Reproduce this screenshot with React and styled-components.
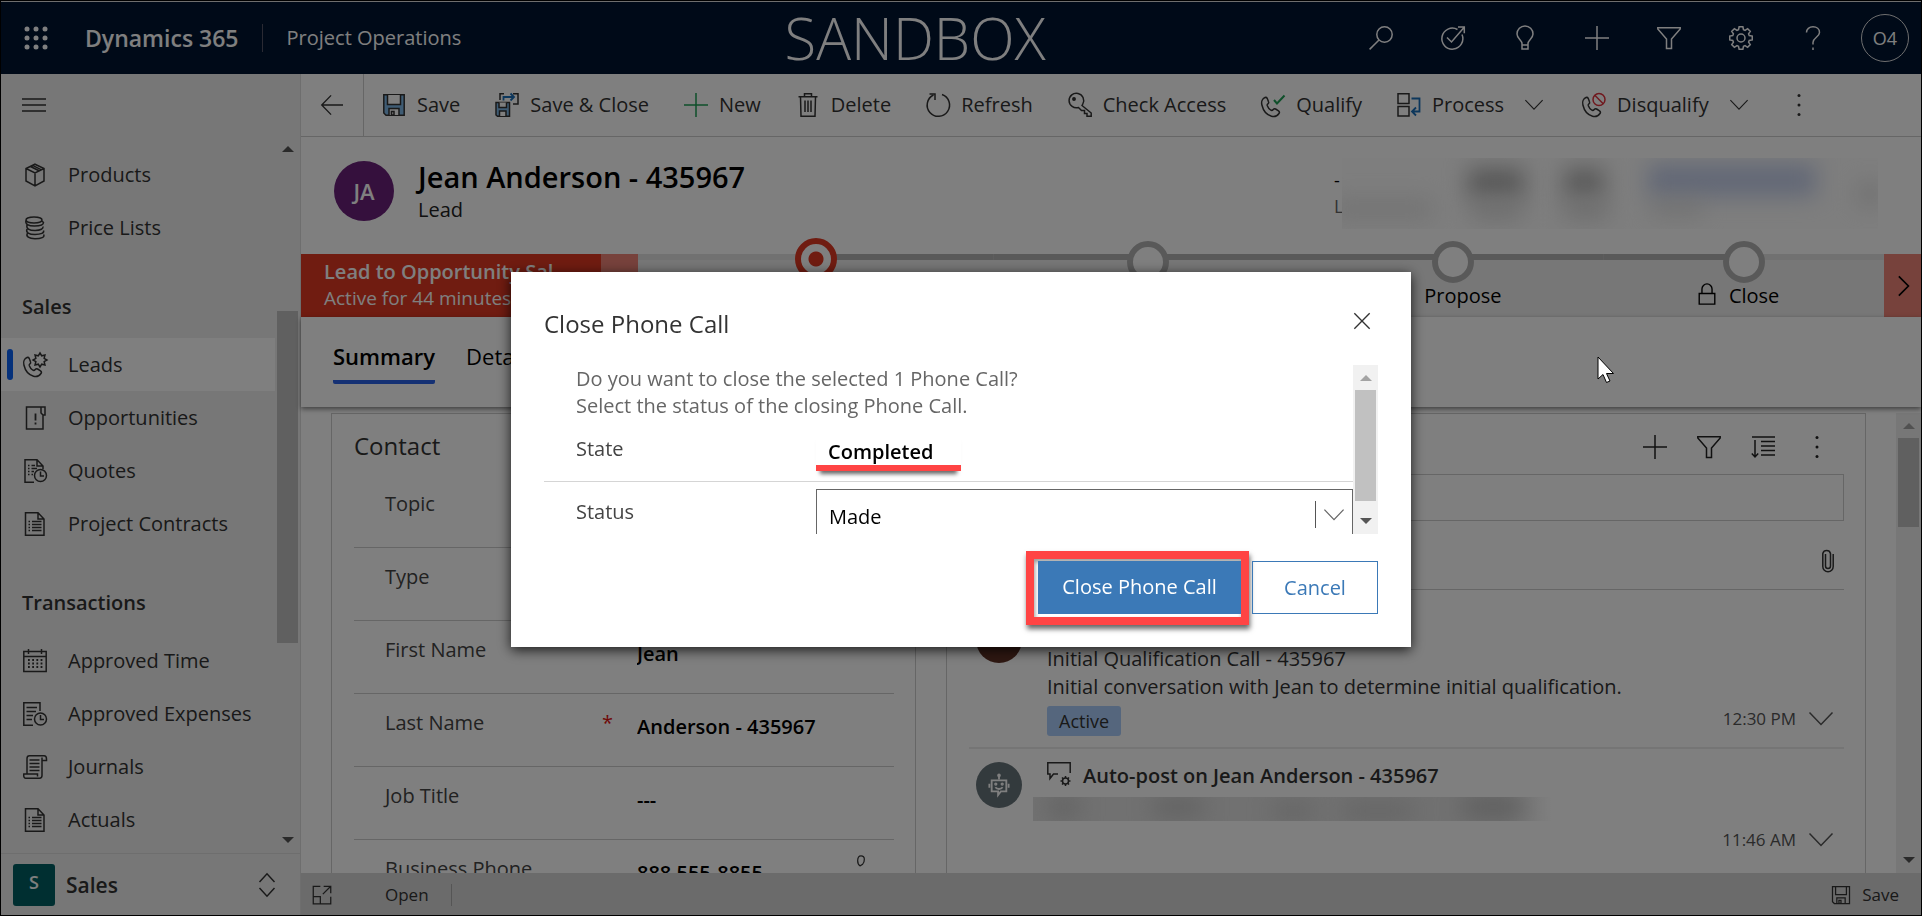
import React from "react";
import styled, { createGlobalStyle, css } from "styled-components";

const GlobalStyle = createGlobalStyle`
  *, *::before, *::after { box-sizing: border-box; }
  body { margin: 0; background: #000; }
  body, button, input, select {
    font-family: "Open Sans", "Noto Sans", sans-serif;
    font-size: 20px;
    line-height: 28px;
  }
  button, input, select { margin: 0; padding: 0; border: 0; background: none; color: inherit; border-radius: 0; }
  a { color: inherit; text-decoration: none; }
  h1, h2, p { margin: 0; font-weight: 400; }
  svg { display: block; flex: none; }
`;

/* ---------- icons ---------- */

const Svg = styled.svg.attrs({ "aria-hidden": true, fill: "none", stroke: "currentColor" })`
  overflow: visible;
`;

function Icon({ size = 24, w = 1.5, box = 24, children }) {
  return (
    <Svg width={size} height={size} viewBox={`0 0 ${box} ${box}`} strokeWidth={w}>
      {children}
    </Svg>
  );
}

const gear = (cx, cy, r, R, n = 8) => {
  const pts = [];
  for (let i = 0; i < n; i++) {
    const a = (i * 2 * Math.PI) / n - Math.PI / 2;
    const s = Math.PI / n;
    [[-0.75, r], [-0.42, R], [0.42, R], [0.75, r]].forEach(([k, q]) =>
      pts.push(`${(cx + q * Math.cos(a + k * s)).toFixed(2)} ${(cy + q * Math.sin(a + k * s)).toFixed(2)}`)
    );
  }
  return `M${pts.join("L")}Z`;
};

const star = (cx, cy, r, R, n = 8) => {
  const pts = [];
  for (let i = 0; i < n * 2; i++) {
    const a = (i * Math.PI) / n - Math.PI / 2;
    const q = i % 2 ? r : R;
    pts.push(`${(cx + q * Math.cos(a)).toFixed(2)} ${(cy + q * Math.sin(a)).toFixed(2)}`);
  }
  return `M${pts.join("L")}Z`;
};

const phone = "M4 4.500C1.600 5.500 0 8.500 .9 12C2.200 17.500 6 22 10.500 23.200C13.500 24 16.400 22.800 18 20.500C18.800 19.300 18.500 18.500 17.500 17.800L14.600 16C13.600 15.400 12.900 15.700 12.200 16.500C11.500 17.400 10.500 17.600 9.600 17C8.200 16 7 14.400 6.300 12.700C6 11.800 6.200 11.300 6.900 10.800C7.800 10.200 7.900 9.600 7.500 8.700L6.200 5.300C5.700 4.400 5 4.200 4 4.500Z";

const WaffleIcon = () => (
  <Icon size={24}>
    {[3, 12, 21].map((y) => [3, 12, 21].map((x) => (
      <circle key={`${x}-${y}`} cx={x} cy={y} r="2.500" fill="currentColor" stroke="none" />
    )))}
  </Icon>
);
const SearchIcon = () => <Icon><circle cx="15.500" cy="8.500" r="7.700" /><path d="M10 14L.6 23.400" /></Icon>;
const TargetIcon = () => (
  <Icon><path d="M16.500 3.500A10.500 10.500 0 1 0 21 8.500" /><path d="M6 11.500L10.500 16L23 1.500M17 1H23.300V7.300" /></Icon>
);
const BulbIcon = () => (
  <Icon><path d="M9 17.500C9 14 4 12.500 4 8A8 8 0 0 1 20 8C20 12.500 15 14 15 17.500V23H9ZM9 19H15" /></Icon>
);
const PlusIcon = ({ size }) => <Icon size={size}><path d="M12 0V24M0 12H24" /></Icon>;
const FilterIcon = () => <Icon><path d="M.8 1.800H23.200V3L14.500 13V22.500H9.500V13L.8 3Z" /></Icon>;
const GearIcon = () => <Icon><path d={gear(12, 12, 8.600, 11.400)} /><circle cx="12" cy="12" r="4" /></Icon>;
const HelpIcon = () => (
  <Icon><path d="M5.500 6.500C5.500 3 8.300 .8 12 .8S18.500 3 18.500 6.500C18.500 11 12 11.500 12 16.500V18.500M12 21.500V24" /></Icon>
);
const MenuIcon = () => <Icon><path d="M0 6H24M0 12H24M0 18H24" /></Icon>;
const BackIcon = () => <Icon size={22}><path d="M24 12H1M11 1.500L.8 12L11 22.500" /></Icon>;
const MoreIcon = () => (
  <Icon><g fill="currentColor" stroke="none"><circle cx="12" cy="2.500" r="1.500" /><circle cx="12" cy="12" r="1.500" /><circle cx="12" cy="21.500" r="1.500" /></g></Icon>
);
const ChevronDown = ({ size = 18, w = 1.5 }) => <Icon size={size} w={w}><path d="M.5 5.500L12 17.500L23.500 5.500" /></Icon>;
const ChevronRight = () => <Icon size={20} w={2}><path d="M7 .5L18.500 12L7 23.500" /></Icon>;
const CloseIcon = () => <Icon size={16} w={2}><path d="M.5 .5L23.500 23.500M23.500 .5L.5 23.500" /></Icon>;
const SaveIcon = ({ fill = "#7fb8e8", size = 24 }) => (
  <Icon size={size}>
    <path d="M1.800 1.800H22.200V22.200H4L1.800 20Z" fill={fill} />
    <path d="M5.500 2V11.500H18.500V2M7 22V15.500H17V22" fill={fill === "none" ? "none" : "#fff"} />
    <path d="M9.500 18.500H12V22H9.500Z" />
  </Icon>
);
const SaveCloseIcon = () => (
  <Icon>
    <path d="M1 9.500H14.500V23.300H2.500L1 22Z" fill="#7fb8e8" />
    <path d="M4 9.500V14.500H11.500V9.500M4.500 23V18H11V23" fill="#fff" />
    <path d="M5 7V.8H9M18 .8H23V11H18" />
    <path d="M8.500 7.500V4H19M15.500 .5L19 4L15.500 7.500" stroke="#1a6fb8" strokeWidth="1.800" />
  </Icon>
);
const DeleteIcon = () => (
  <Icon><path d="M2.500 3.800H21.500M8.500 3.500V.8H15.500V3.500M4.500 4L5 23.200H19L19.500 4M9 7.500V19M12 7.500V19M15 7.500V19" /></Icon>
);
const RefreshIcon = () => (
  <Icon><path d="M7.500 2A11.200 11.200 0 1 0 16 1.500" /><path d="M3.500 1H9V7" /></Icon>
);
const KeyIcon = () => (
  <Icon><path d="M14 12.500L23.200 20V23.200H19V20.500H16.500V17.500H13.500L10.500 14.500A7.300 7.300 0 1 1 14.800 11Z" /><circle cx="6" cy="6" r="1.200" fill="currentColor" /></Icon>
);
const QualifyIcon = () => (
  <Icon><path d={phone} /><path d="M13 7L16 10.500L23.500 2.500" stroke="#1e9e55" strokeWidth="2" /></Icon>
);
const ProcessIcon = () => (
  <Icon><path d="M1 .8H12V10.500H1ZM1 13.500H12V23H1Z" /><path d="M14.500 5.500H22.500V18.500H15.500M19 14.500L15 18.500L19 22.500" stroke="#1a6fb8" strokeWidth="1.800" /></Icon>
);
const DisqualifyIcon = () => (
  <Icon><path d={phone} /><circle cx="17" cy="6.500" r="6" stroke="#e0303c" strokeWidth="1.500" /><path d="M12.800 2.300L21.200 10.700" stroke="#e0303c" strokeWidth="1.500" /></Icon>
);
const BoxIcon = () => (
  <Icon><path d="M12 1.200L21 5.500V18L12 22.800L3 18V5.500ZM3 5.500L12 10L21 5.500M12 10V22.800M7.500 3.500L16.500 8M9.500 2.300L18.500 6.800" /></Icon>
);
const CoinsIcon = () => (
  <Icon>
    <ellipse cx="11" cy="4" rx="8" ry="3" />
    <path d="M3 4.500C2 8 5 10 11.500 10S20.500 8.500 20.500 6.500L19 5M4 9C3 12.500 6 14.500 12 14.500S20.500 12.500 20 10.500M4 13C2.500 16.500 6 18.500 12 18.500S21.500 17 20.500 14.500M4.500 17C2.500 20.500 6 22.800 12 22.800S22.500 21 20.500 18.500" />
  </Icon>
);
const LeadIcon = () => <Icon><path d={phone} /><path d={star(17, 7, 4.500, 7)} fill="#fff" /></Icon>;
const OpportunityIcon = () => (
  <Icon><path d="M18 1H3.500V23H20V9M18 1H22V9H20L18 7Z" /><path d="M12.500 7.500V14.500M12.500 16.500V18.500" strokeWidth="1.800" /></Icon>
);
const PageIcon = () => (
  <Icon><path d="M2.500 .8H15L21 7V23.200H2.500ZM15 .8V7H21" /><path d="M5.500 9.500H7M9 9.500H18.500M5.500 12.500H7M9 12.500H18.500M5.500 15.500H7M9 15.500H18.500M5.500 18.500H7M9 18.500H18.500" /></Icon>
);
const PageClockIcon = () => (
  <Icon>
    <path d="M11 23.200H2V.8H14L20 7V10M14 .8V7H20" /><path d="M5 6.500H6.500M8.500 6.500H12M5 9.500H6.500M8.500 9.500H14M5 12.500H6.500M8.500 12.500H11M5 15.500H6.500M8.500 15.500H10" />
    <circle cx="17.500" cy="16.500" r="6" /><path d="M17.500 12.500V17H21" />
  </Icon>
);
const CalendarIcon = () => (
  <Icon><path d="M.8 2.500H23.200V22.500H.8ZM.8 7.500H23.200M5.500 0V5M18.500 0V5" /><path d="M5 11H20M5 14.500H20M5 18H20" strokeDasharray="1.800 2.400" strokeWidth="2" /></Icon>
);
const ExpenseIcon = () => (
  <Icon><path d="M10 23.200H.8V.8H17V9M3.500 5.500H14M3.500 9.500H13M3.500 13.500H10M3.500 17.500H9" /><circle cx="17.500" cy="17" r="6" /><path d="M17.500 13V17.500H21" /></Icon>
);
const JournalIcon = () => (
  <Icon><path d="M4 19V3.500C4 1.500 5 .8 6.500 .8H21C23 .8 23.500 2 23.500 4V5.500H19V20.500C19 22.500 18 23.200 16.500 23.200H2.500C1 23.200 .5 21.500 .8 19H14.500V21.500M19 5V2.500M6.500 5H16.500M6.500 8.500H16.500M6.500 12H16.500M6.500 15.500H16.500" /></Icon>
);
const UpDownIcon = () => <Icon w={1.5}><path d="M4.500 9L12 .8L19.500 9M4.500 15L12 23.200L19.500 15" /></Icon>;
const LockIcon = () => <Icon size={22}><path d="M3.500 11.500H20.500V23H3.500ZM6.500 11V6.500A5.500 5.500 0 0 1 17.500 6.500V11" /></Icon>;
const SortIcon = () => <Icon><path d="M1 2H24M10 6.500H24M10 11H24M10 15.500H24M10 20H24M4 5V22M.8 18.500L4 22L7.200 18.500" /></Icon>;
const ClipIcon = () => (
  <Icon><path d="M9.500 6V18A2.500 2.500 0 0 0 14.500 18V5.500A4 4 0 0 0 6.800 5.500V18.500A5 5 0 0 0 17.200 18.500V6" /></Icon>
);
const CommentIcon = () => (
  <Icon>
    <path d="M11 12H6.500L3 16.500V12H.8V.8H23.200V11" />
    <circle cx="18.500" cy="19" r="3" />
    <path d="M18.500 14V16M18.500 22V24M13.500 19H15.500M21.500 19H23.500M15 15.500L16.500 17M20.500 21L22 22.500M22 15.500L20.500 17M16.500 21L15 22.500" />
  </Icon>
);
const BotIcon = () => (
  <Icon size={22} w={2}>
    <path d="M4 7H20V19H14L11 23V19H4Z" /><path d="M12 6V1.500M1.500 10.500V15M22.500 10.500V15" /><path d="M8 14.500C10 17 14 17 16 14.500" />
    <circle cx="8.500" cy="11" r=".8" /><circle cx="15.500" cy="11" r=".8" /><circle cx="12" cy="1.500" r="1" />
  </Icon>
);
const PopoutIcon = () => <Icon size={20}><path d="M10 1.500H1.500V22.500H22.500V14M1.500 14H10V22.500M14 1.500H22.500V10M22.500 1.500L13 11" /></Icon>;
const HandsetIcon = () => <Icon size={20}><path d="M12 1C9 1 8 4 8 7C8 10 9 12 11 13L14 11C16 9 16 7 16 5C16 2.500 14.500 1 12 1Z" /></Icon>;
const CursorIcon = () => (
  <Svg width="18" height="28" viewBox="0 0 18 28" strokeWidth="1">
    <path d="M1 1V23L6 18.500L9.500 26.500L13 25L9.500 17.500H16.500Z" fill="#fff" stroke="#000" />
  </Svg>
);

/* ---------- shell ---------- */

const Page = styled.div`
  height: 100vh;
  min-height: 600px;
  display: flex;
  flex-direction: column;
  overflow: hidden;
  background: #fff;
  color: #333;
  border: 1px solid #000;
`;

const TopBar = styled.header`
  flex: none;
  height: 73px;
  display: grid;
  grid-template-columns: auto 1fr auto;
  align-items: center;
  background: #001431;
  border-top: 1px solid #ddd;
  color: #fff;
  padding: 0 12px 0 23px;
`;
const Brand = styled.div`
  display: flex;
  align-items: center;
`;
const BrandName = styled.a`
  margin-left: 37px;
  padding-right: 23px;
  font-size: 23px;
  font-weight: 600;
`;
const AppName = styled.a`
  border-left: 1px solid #556;
  padding-left: 24px;
`;
const EnvName = styled.div`
  font-size: 58px;
  line-height: 72px;
  font-weight: 300;
  text-align: center;
`;
const TopActions = styled.div`
  display: flex;
  justify-content: flex-end;
  align-items: center;
  gap: 48px;
`;
const IconButton = styled.button`
  display: grid;
  place-items: center;
  width: 24px;
  height: 24px;
`;
const UserButton = styled.button`
  width: 48px;
  height: 48px;
  margin-left: -12px;
  border: 1px solid #ddd;
  border-radius: 50%;
  font-size: 18px;
`;

const Body = styled.div`
  flex: 1;
  min-height: 0;
  display: flex;
`;

/* ---------- site map ---------- */

const Sidebar = styled.aside`
  flex: none;
  width: 300px;
  display: flex;
  flex-direction: column;
  background: #efefef;
  border-right: 1px solid #ddd;
`;
const SidebarTop = styled.div`
  padding: 19px 21px;
  height: 62px;
`;
const NavScroller = styled.div`
  flex: 1;
  min-height: 0;
  display: flex;
`;
const Nav = styled.nav`
  flex: 1;
  padding-top: 12px;
  overflow: hidden;
`;
const NavHeading = styled.h2`
  height: 84px;
  padding: 39px 21px 0;
  font-size: 20px;
  font-weight: 600;
`;
const NavLink = styled.a`
  height: 53px;
  display: flex;
  align-items: center;
  gap: 21px;
  padding-left: 22px;
  ${(p) => p.$current && css`
    background: #fff;
    &::before {
      content: "";
      width: 6px;
      height: 31px;
      margin: 0 -11px 0 -16px;
      border-radius: 3px;
      background: #0b63f6;
    }
  `}
`;
const AreaSwitcher = styled.button`
  flex: none;
  height: 62px;
  display: flex;
  align-items: center;
  gap: 11px;
  padding: 0 21px 0 12px;
  border-top: 1px solid #ddd;
  font-size: 21px;
  font-weight: 600;
  text-align: left;
`;
const AreaTile = styled.span`
  width: 42px;
  height: 42px;
  border-radius: 3px;
  background: #005f63;
  color: #fff;
  font-size: 18px;
  line-height: 36px;
  text-align: center;
`;
const Grow = styled.span`
  flex: 1;
`;

/* ---------- scroll bars ---------- */

const ScrollTrack = styled.div`
  flex: none;
  width: 25px;
  display: flex;
  flex-direction: column;
  align-items: center;
  justify-content: space-between;
  padding: 10px 0;
  background: ${(p) => p.$bg || "transparent"};
`;
const Arrow = styled.span`
  flex: none;
  border: 6px solid transparent;
  ${(p) => p.$down
    ? css`border-top: 6px solid #555; border-bottom: 0;`
    : css`border-bottom: 6px solid ${p.$faint ? "#a3a3a3" : "#555"}; border-top: 0;`}
`;
const Thumb = styled.span`
  width: 21px;
  margin-top: ${(p) => p.$before}px;
  height: ${(p) => p.$length};
  margin-bottom: auto;
  background: #c1c1c1;
`;

/* ---------- command bar ---------- */

const Main = styled.main`
  flex: 1;
  min-width: 0;
  display: flex;
  flex-direction: column;
`;
const CommandBar = styled.div`
  flex: none;
  height: 63px;
  display: flex;
  align-items: center;
  border-bottom: 1px solid #ccc;
`;
const BackButton = styled.button`
  align-self: stretch;
  width: 63px;
  display: grid;
  place-items: center;
  border-right: 1px solid #ccc;
`;
const Commands = styled.div`
  display: flex;
  align-items: center;
  gap: 35px;
  padding-left: 18px;
`;
const Command = styled.button`
  display: flex;
  align-items: center;
  gap: 11px;
  color: ${(p) => p.$tone || "inherit"};
  white-space: nowrap;
`;
const CommandText = styled.span`
  color: #333;
`;
const MenuMark = styled.span`
  padding: 0 4px 0 10px;
  color: #333;
`;

/* ---------- record header ---------- */

const RecordHeader = styled.div`
  flex: none;
  height: 117px;
  display: flex;
  padding: 21px 43px 0 33px;
`;
const RoundBadge = styled.span`
  flex: none;
  display: grid;
  place-items: center;
  width: ${(p) => p.$size}px;
  height: ${(p) => p.$size}px;
  border-radius: 50%;
  background: ${(p) => p.$bg};
  color: #fff;
  font-size: ${(p) => (p.$size > 50 ? 22 : 18)}px;
  font-weight: 600;
`;
const RecordAvatar = styled(RoundBadge)`
  margin-top: 3px;
`;
const RecordTitles = styled.div`
  flex: 1;
  padding-left: 24px;
`;
const RecordTitle = styled.h1`
  color: #000;
  font-size: 29px;
  line-height: 38px;
  font-weight: 600;
`;
const RecordKind = styled.p`
  color: #222;
`;
const HeaderField = styled.div`
  color: #000;
  font-size: 18px;
  width: 8px;
  overflow: hidden;
  padding-top: 8px;
  span { display: block; color: #666; line-height: 24px; }
`;
const Redacted = styled.div`
  position: relative;
  flex: none;
  width: ${(p) => p.$width}px;
  height: ${(p) => p.$height}px;
  overflow: hidden;
  background: ${(p) => p.$bg};
`;
const RedactedLine = styled(Redacted)`
  margin: 7px 0 5px -14px;
`;
const Smudge = styled.span`
  position: absolute;
  left: ${(p) => p.$x}px;
  top: ${(p) => p.$y}px;
  width: ${(p) => p.$w}px;
  height: ${(p) => p.$h}px;
  background: ${(p) => p.$c};
  filter: blur(11px);
`;

/* ---------- process ---------- */

const ProcessBar = styled.div`
  flex: none;
  height: 63px;
  display: flex;
`;
const ProcessName = styled.div`
  flex: none;
  width: 300px;
  padding: 4px 23px;
  background: #e03822;
  color: #fff;
  font-size: 19px;
  line-height: 27px;
  white-space: nowrap;
  overflow: hidden;
`;
const ProcessTitle = styled.div`
  width: 232px;
  overflow: hidden;
  font-size: 20px;
  font-weight: 600;
`;
const ProcessStep = styled.button`
  flex: none;
  width: 37px;
  display: grid;
  place-items: center;
  background: #ef8478;
  color: #000;
`;
const Stages = styled.div`
  flex: 1;
  display: flex;
  background: #efefef;
`;
const Stage = styled.div`
  flex: ${(p) => p.$share} 1 0;
  display: flex;
  flex-direction: column;
  align-items: center;
  background: linear-gradient(to right, ${(p) => (p.$first ? "#e3e3e3" : "#b3b3b3")} 50%, ${(p) => (p.$last ? "#e3e3e3" : "#b3b3b3")} 50%) top / 100% 6px no-repeat;
`;
const StageDot = styled.button`
  flex: none;
  width: 42px;
  height: 42px;
  margin-top: ${(p) => (p.$active ? -16 : -13)}px;
  border: 6px solid ${(p) => (p.$active ? "#e03822" : "#b3b3b3")};
  border-radius: 50%;
  background: ${(p) => (p.$active ? "radial-gradient(#e03822 0 7px, #fff 8px)" : "#fff")};
`;
const StageLabel = styled.div`
  display: flex;
  align-items: center;
  gap: 11px;
  margin-right: 13px;
  line-height: 22px;
  color: #000;
  svg { margin-bottom: 4px; }
`;

/* ---------- tabs and form ---------- */

const Tabs = styled.div`
  flex: none;
  position: relative;
  height: 90px;
  display: flex;
  align-items: flex-start;
  gap: 31px;
  padding: 23px 32px 0;
  box-shadow: 0 2px 5px rgba(0, 0, 0, 0.5);
`;
const Tab = styled.button`
  padding-bottom: 8px;
  border-bottom: 4px solid ${(p) => (p.$current ? "#2b63e8" : "transparent")};
  border-radius: 2px;
  color: #000;
  font-size: 22px;
  line-height: 32px;
  font-weight: ${(p) => (p.$current ? 600 : 400)};
`;
const FormArea = styled.div`
  flex: 1;
  min-height: 0;
  display: flex;
  justify-content: space-between;
  padding-top: 6px;
  overflow: hidden;
`;
const FormColumns = styled.div`
  flex: 1;
  min-width: 0;
  display: grid;
  grid-template-columns: 585fr 920fr;
  gap: 30px;
  padding: 0 30px;
`;
const Card = styled.section`
  min-width: 0;
  border: 1px solid #ccc;
  border-bottom: 0;
  padding: 16px 21px 0 22px;
`;
const CardTitle = styled.h2`
  font-size: 24px;
  line-height: 32px;
`;
const FieldRow = styled.div`
  height: 73px;
  display: grid;
  grid-template-columns: 200px 18px 1fr auto;
  gap: 0 17px;
  padding: 15px 23px 0 31px;
  border-bottom: 1px solid #ccc;
  label { color: #444; }
`;
const Required = styled.span`
  color: #e01010;
`;
const FieldInput = styled.input`
  width: 100%;
  height: 28px;
  margin-top: 4px;
  color: #000;
  font-weight: 600;
`;
const FieldList = styled.div`
  padding-top: 13px;
`;

/* ---------- timeline ---------- */

const TimelineTools = styled.div`
  height: 34px;
  display: flex;
  align-items: center;
  justify-content: flex-end;
  gap: 30px;
  padding-right: 15px;
  color: #222;
`;
const TimelineSearch = styled.input`
  display: block;
  width: 100%;
  height: 47px;
  margin-top: 10px;
  border: 1px solid #ccc;
`;
const NoteRow = styled.div`
  height: 69px;
  display: flex;
  align-items: center;
  justify-content: flex-end;
  padding: 10px 4px 0 0;
  border-bottom: 1px solid #ccc;
`;
const Entry = styled.article`
  display: flex;
  gap: 25px;
  padding: ${(p) => p.$top}px 0 11px 7px;
  border-bottom: 2px solid #eaeaea;
  &:last-child { border-bottom: 0; }
`;
const EntryBody = styled.div`
  flex: 1;
  min-width: 0;
`;
const EntryTitle = styled.h2`
  display: flex;
  align-items: center;
  gap: 12px;
  color: #333;
  font-size: 20px;
  font-weight: 600;
  svg { margin-bottom: 4px; }
`;
const EntryFoot = styled.div`
  display: flex;
  align-items: center;
  justify-content: space-between;
  padding-right: 11px;
`;
const StatusTag = styled.span`
  height: 30px;
  margin-top: 5px;
  padding: 0 12px;
  border-radius: 3px;
  background: #aacdfa;
  font-size: 18px;
  line-height: 30px;
`;
const EntryTime = styled.button`
  display: flex;
  align-items: center;
  gap: 13px;
  margin-left: auto;
  color: #555;
  font-size: 17px;
`;

const StatusBar = styled.footer`
  flex: none;
  height: 42px;
  display: flex;
  align-items: center;
  padding: 2px 22px 0 9px;
  background: #d6d6d6;
  font-size: 17px;
`;
const FooterButton = styled.button`
  display: flex;
  align-items: center;
  gap: 11px;
  font-size: 17px;
`;
const OpenState = styled.span`
  margin-left: 51px;
  padding-right: 22px;
  border-right: 1px solid #aaa;
  line-height: 22px;
`;

/* ---------- dialog ---------- */

const Backdrop = styled.div`
  position: fixed;
  inset: 0;
  display: grid;
  place-items: center;
  padding-top: 2px;
  background: rgba(0, 0, 0, 0.5);
`;
const Dialog = styled.div`
  width: 900px;
  max-width: 100%;
  display: flex;
  flex-direction: column;
  padding: 33px 33px 22px;
  background: #fff;
  color: #333;
  box-shadow: 0 3px 12px rgba(0, 0, 0, 0.8);
`;
const DialogHead = styled.div`
  flex: none;
  display: flex;
  justify-content: space-between;
  height: 60px;
  padding-right: 4px;
`;
const DialogClose = styled(IconButton)`
  margin-top: 4px;
`;
const DialogTitle = styled.h2`
  font-size: 24px;
  line-height: 38px;
`;
const DialogScroller = styled.div`
  flex: none;
  height: 169px;
  display: flex;
`;
const DialogBody = styled.div`
  flex: 1;
  overflow: hidden;
`;
const Message = styled.p`
  padding: 0 32px;
  color: #666;
  line-height: 27px;
`;
const DialogRow = styled.div`
  display: grid;
  grid-template-columns: 272px 1fr;
  padding-top: 7px;
  border-bottom: 1px solid #d5d5d5;
  label { padding: 9px 0 0 32px; color: #444; }
`;
const StateInput = styled.input`
  justify-self: start;
  width: 145px;
  height: 40px;
  margin: 5px 0 10px;
  padding: 8px 0 0 12px;
  color: #000;
  font-weight: 600;
  border-bottom: 6px solid #ff4444;
  box-shadow: 0 7px 4px -4px rgba(0, 0, 0, 0.6);
`;
const SelectBox = styled.div`
  height: 56px;
  display: flex;
  align-items: center;
  padding-right: 8px;
  border: 1px solid #666;
  color: #666;
`;
const StatusSelect = styled.select`
  appearance: none;
  flex: 1;
  height: 28px;
  padding-left: 12px;
  color: #000;
`;
const SelectMark = styled.span`
  display: grid;
  place-items: center;
  height: 27px;
  padding-left: 8px;
  margin-bottom: 4px;
  border-left: 1px solid #555;
`;
const DialogActions = styled.div`
  flex: none;
  display: flex;
  justify-content: flex-end;
  align-items: center;
  gap: 3px;
  padding-top: 17px;
`;
const Highlight = styled.div`
  padding: 2px 0 3px 4px;
  border: 8px solid #ff4444;
  box-shadow: 1px 4px 5px rgba(0, 0, 0, 0.6), inset 1px 3px 4px rgba(0, 0, 0, 0.4);
`;
const PrimaryButton = styled.button`
  display: block;
  width: 203px;
  height: 53px;
  background: #3b79b7;
  color: #fff;
`;
const PlainButton = styled.button`
  width: 126px;
  height: 53px;
  border: 1px solid #3b79b7;
  color: #3b79b7;
`;
const Pointer = styled.div`
  position: fixed;
  left: 1597px;
  top: 356px;
`;

/* ---------- data ---------- */

const navTop = [["Products", BoxIcon], ["Price Lists", CoinsIcon]];
const navGroups = [
  ["Sales", [["Leads", LeadIcon], ["Opportunities", OpportunityIcon], ["Quotes", PageClockIcon], ["Project Contracts", PageIcon]]],
  ["Transactions", [["Approved Time", CalendarIcon], ["Approved Expenses", ExpenseIcon], ["Journals", JournalIcon], ["Actuals", PageIcon]]],
];
const commands = [
  ["Save", SaveIcon], ["Save & Close", SaveCloseIcon], ["New", PlusIcon, "#1e9e55"], ["Delete", DeleteIcon],
  ["Refresh", RefreshIcon], ["Check Access", KeyIcon], ["Qualify", QualifyIcon],
  ["Process", ProcessIcon, null, true], ["Disqualify", DisqualifyIcon, null, true],
];
const topIcons = [
  ["Search", SearchIcon], ["Task flow", TargetIcon], ["Insights", BulbIcon], ["Add", PlusIcon],
  ["Filter", FilterIcon], ["Settings", GearIcon], ["Help", HelpIcon],
];
const fields = [
  ["topic", "Topic", ""], ["type", "Type", ""], ["first", "First Name", "Jean"],
  ["last", "Last Name", "Anderson - 435967", true], ["job", "Job Title", "---"], ["phone", "Business Phone", "888 555-8855"],
];

const NavItem = ({ label, Glyph }) => (
  <NavLink href="#" $current={label === "Leads"}><Glyph />{label}</NavLink>
);

export default function App() {
  return (
    <>
      <GlobalStyle />
      <Page>
        <TopBar>
          <Brand>
            <IconButton aria-label="Apps"><WaffleIcon /></IconButton>
            <BrandName href="#">Dynamics 365</BrandName>
            <AppName href="#">Project Operations</AppName>
          </Brand>
          <EnvName>SANDBOX</EnvName>
          <TopActions>
            {topIcons.map(([label, Glyph]) => (
              <IconButton key={label} aria-label={label}><Glyph /></IconButton>
            ))}
            <UserButton>O4</UserButton>
          </TopActions>
        </TopBar>
        <Body>
          <Sidebar>
            <SidebarTop><IconButton aria-label="Menu"><MenuIcon /></IconButton></SidebarTop>
            <NavScroller>
              <Nav>
                {navTop.map(([label, Glyph]) => <NavItem key={label} label={label} Glyph={Glyph} />)}
                {navGroups.map(([title, items]) => (
                  <React.Fragment key={title}>
                    <NavHeading>{title}</NavHeading>
                    {items.map(([label, Glyph]) => <NavItem key={label} label={label} Glyph={Glyph} />)}
                  </React.Fragment>
                ))}
              </Nav>
              <ScrollTrack><Arrow /><Thumb $before={159} $length="332px" /><Arrow $down /></ScrollTrack>
            </NavScroller>
            <AreaSwitcher>
              <AreaTile>S</AreaTile>Sales<Grow /><UpDownIcon />
            </AreaSwitcher>
          </Sidebar>
          <Main>
            <CommandBar>
              <BackButton aria-label="Back"><BackIcon /></BackButton>
              <Commands>
                {commands.map(([label, Glyph, tone, menu]) => (
                  <Command key={label} $tone={tone}>
                    <Glyph />
                    <CommandText>{label}</CommandText>
                    {menu && <MenuMark><ChevronDown /></MenuMark>}
                  </Command>
                ))}
                <IconButton aria-label="More commands"><MoreIcon /></IconButton>
              </Commands>
            </CommandBar>
            <RecordHeader>
              <RecordAvatar $size={60} $bg="#6a207a">JA</RecordAvatar>
              <RecordTitles>
                <RecordTitle>Jean Anderson - 435967</RecordTitle>
                <RecordKind>Lead</RecordKind>
              </RecordTitles>
              <HeaderField>-<span>L</span></HeaderField>
              <Redacted $width={536} $height={71} $bg="#fcfcfc">
                <Smudge $x={-10} $y={42} $w={100} $h={18} $c="#e4e4e4" />
                <Smudge $x={126} $y={10} $w={56} $h={30} $c="#b0b0b0" />
                <Smudge $x={130} $y={42} $w={50} $h={20} $c="#dcdcdc" />
                <Smudge $x={222} $y={10} $w={40} $h={30} $c="#b4b4b4" />
                <Smudge $x={222} $y={42} $w={44} $h={20} $c="#dcdcdc" />
                <Smudge $x={306} $y={6} $w={168} $h={32} $c="#c4cfec" />
                <Smudge $x={310} $y={44} $w={50} $h={12} $c="#dcdcdc" />
                <Smudge $x={516} $y={26} $w={24} $h={20} $c="#e0e0e0" />
              </Redacted>
            </RecordHeader>
            <ProcessBar>
              <ProcessName>
                <ProcessTitle>Lead to Opportunity Sal</ProcessTitle>
                Active for 44 minutes
              </ProcessName>
              <ProcessStep aria-label="Previous stage" />
              <Stages>
                <Stage $share={356} $first><StageDot $active aria-label="Active stage" /></Stage>
                <Stage $share={308}><StageDot aria-label="Stage" /></Stage>
                <Stage $share={303}><StageDot aria-label="Propose" /><StageLabel><LockIcon />Propose</StageLabel></Stage>
                <Stage $share={280} $last><StageDot aria-label="Close" /><StageLabel><LockIcon />Close</StageLabel></Stage>
              </Stages>
              <ProcessStep aria-label="Next stage"><ChevronRight /></ProcessStep>
            </ProcessBar>
            <Tabs role="tablist">
              <Tab role="tab" $current>Summary</Tab>
              <Tab role="tab">Details</Tab>
            </Tabs>
            <FormArea>
              <FormColumns>
                <Card>
                  <CardTitle>Contact</CardTitle>
                  <FieldList>
                    {fields.map(([id, label, value, required]) => (
                      <FieldRow key={id}>
                        <label htmlFor={id}>{label}</label>
                        <Required>{required && "*"}</Required>
                        <FieldInput id={id} defaultValue={value} />
                        {id === "phone" && <HandsetIcon />}
                      </FieldRow>
                    ))}
                  </FieldList>
                </Card>
                <Card>
                  <TimelineTools>
                    <IconButton aria-label="New record"><PlusIcon /></IconButton>
                    <IconButton aria-label="Filter timeline"><FilterIcon /></IconButton>
                    <IconButton aria-label="Sort timeline"><SortIcon /></IconButton>
                    <IconButton aria-label="More"><MoreIcon /></IconButton>
                  </TimelineTools>
                  <TimelineSearch aria-label="Search timeline" />
                  <NoteRow><IconButton aria-label="Attach"><ClipIcon /></IconButton></NoteRow>
                  <Entry $top={27}>
                    <RoundBadge $size={46} $bg="#5e3024">O4</RoundBadge>
                    <EntryBody>
                      <p>&nbsp;</p>
                      <p>Initial Qualification Call - 435967</p>
                      <p>Initial conversation with Jean to determine initial qualification.</p>
                      <EntryFoot>
                        <StatusTag>Active</StatusTag>
                        <EntryTime>12:30 PM<ChevronDown size={24} /></EntryTime>
                      </EntryFoot>
                    </EntryBody>
                  </Entry>
                  <Entry $top={13}>
                    <RoundBadge $size={46} $bg="#67747a"><BotIcon /></RoundBadge>
                    <EntryBody>
                      <EntryTitle><CommentIcon />Auto-post on Jean Anderson - 435967</EntryTitle>
                      <RedactedLine $width={520} $height={24} $bg="linear-gradient(to right, #e2e2e2 90%, #fff)">
                        <Smudge $x={16} $y={0} $w={30} $h={20} $c="#c4c4c4" />
                        <Smudge $x={120} $y={0} $w={50} $h={20} $c="#c4c4c4" />
                        <Smudge $x={240} $y={4} $w={40} $h={20} $c="#cccccc" />
                        <Smudge $x={310} $y={4} $w={70} $h={20} $c="#cccccc" />
                        <Smudge $x={430} $y={0} $w={60} $h={20} $c="#bcbcbc" />
                      </RedactedLine>
                      <EntryFoot>
                        <EntryTime>11:46 AM<ChevronDown size={24} /></EntryTime>
                      </EntryFoot>
                    </EntryBody>
                  </Entry>
                </Card>
              </FormColumns>
              <ScrollTrack $bg="#efefef"><Arrow $faint /><Thumb $before={9} $length="89px" /><Arrow $down /></ScrollTrack>
            </FormArea>
            <StatusBar>
              <IconButton aria-label="Open in new window"><PopoutIcon /></IconButton>
              <OpenState>Open</OpenState>
              <Grow />
              <FooterButton><SaveIcon fill="none" size={20} />Save</FooterButton>
            </StatusBar>
          </Main>
        </Body>
      </Page>
      <Backdrop>
        <Dialog role="dialog" aria-modal="true" aria-labelledby="dialog-title">
          <DialogHead>
            <DialogTitle id="dialog-title">Close Phone Call</DialogTitle>
            <DialogClose aria-label="Close dialog"><CloseIcon /></DialogClose>
          </DialogHead>
          <DialogScroller>
            <DialogBody>
              <Message>Do you want to close the selected 1 Phone Call?</Message>
              <Message>Select the status of the closing Phone Call.</Message>
              <DialogRow>
                <label htmlFor="state">State</label>
                <StateInput id="state" readOnly defaultValue="Completed" />
              </DialogRow>
              <DialogRow>
                <label htmlFor="status">Status</label>
                <SelectBox>
                  <StatusSelect id="status"><option>Made</option></StatusSelect>
                  <SelectMark><ChevronDown size={20} /></SelectMark>
                </SelectBox>
              </DialogRow>
            </DialogBody>
            <ScrollTrack $bg="#f1f1f1"><Arrow $faint /><Thumb $before={9} $length="111px" /><Arrow $down /></ScrollTrack>
          </DialogScroller>
          <DialogActions>
            <Highlight><PrimaryButton>Close Phone Call</PrimaryButton></Highlight>
            <PlainButton>Cancel</PlainButton>
          </DialogActions>
        </Dialog>
      </Backdrop>
      <Pointer><CursorIcon /></Pointer>
    </>
  );
}
